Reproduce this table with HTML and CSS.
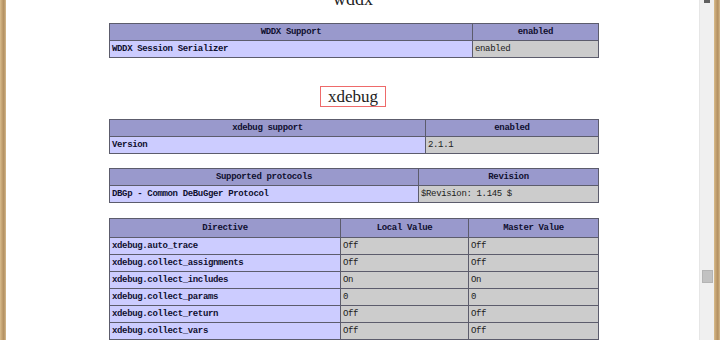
FILE: index.html
```html
<!DOCTYPE html>
<html lang="en">
<head>
  <meta charset="UTF-8">
  <title>phpinfo()</title>
  <link rel="stylesheet" href="styles.css">
</head>
<body>
  <div class="window">
    <div class="frame"></div>

    <div class="viewport">
      <div class="page">
        <h2 class="module-title first">wddx</h2>
        <table class="info t-wddx">
          <colgroup><col class="c1"><col class="c2"></colgroup>
          <tr class="h"><th>WDDX Support</th><th>enabled</th></tr>
          <tr><td class="e">WDDX Session Serializer</td><td class="v">enabled</td></tr>
        </table>

        <h2 class="module-title"><a class="anchor" name="module_xdebug">xdebug</a></h2>
        <table class="info t-support">
          <colgroup><col class="c1"><col class="c2"></colgroup>
          <tr class="h"><th>xdebug support</th><th>enabled</th></tr>
          <tr><td class="e">Version</td><td class="v">2.1.1</td></tr>
        </table>

        <table class="info t-protocols">
          <colgroup><col class="c1"><col class="c2"></colgroup>
          <tr class="h"><th>Supported protocols</th><th>Revision</th></tr>
          <tr><td class="e">DBGp - Common DeBuGger Protocol</td><td class="v">$Revision: 1.145 $</td></tr>
        </table>

        <table class="info t-directives">
          <colgroup><col class="c1"><col class="c2"><col class="c3"></colgroup>
          <tr class="h tall"><th>Directive</th><th>Local Value</th><th>Master Value</th></tr>
          <tr><td class="e">xdebug.auto_trace</td><td class="v">Off</td><td class="v">Off</td></tr>
          <tr><td class="e">xdebug.collect_assignments</td><td class="v">Off</td><td class="v">Off</td></tr>
          <tr><td class="e">xdebug.collect_includes</td><td class="v">On</td><td class="v">On</td></tr>
          <tr><td class="e">xdebug.collect_params</td><td class="v">0</td><td class="v">0</td></tr>
          <tr><td class="e">xdebug.collect_return</td><td class="v">Off</td><td class="v">Off</td></tr>
          <tr><td class="e">xdebug.collect_vars</td><td class="v">Off</td><td class="v">Off</td></tr>
          <tr><td class="e">xdebug.default_enable</td><td class="v">On</td><td class="v">On</td></tr>
        </table>
      </div>
    </div>

    <div class="scrollbar">
      <div class="arrow"></div>
      <div class="thumb"></div>
    </div>

    <div class="frame"></div>
  </div>
</body>
</html>
```

FILE: styles.css
```css
html, body {
  margin: 0;
  padding: 0;
  background: #fff;
}
.window {
  display: flex;
  width: 720px;
  height: 340px;
  overflow: hidden;
}
.frame {
  width: 6px;
  flex: none;
  background: linear-gradient(to right, #d8bc8c 0, #c4a272 2px, #b08e60 4px, #c9aa7c 5px, #d3b78b 6px);
}
.viewport {
  flex: 1;
  overflow: hidden;
  background: #fff;
}
.page {
  width: 694px;
  text-align: center;
  color: #000;
}
.module-title {
  margin: 28px 0 12px;
  font-family: "Liberation Serif", serif;
  font-size: 17px;
  font-weight: normal;
  line-height: 19px;
  color: #222;
}
/* previous module's title, scrolled mostly out of view */
.module-title.first {
  margin: -10px 0 14px;
  font-size: 18px;
}
.anchor {
  display: inline-block;
  padding: 0 7px;
  border: 1px solid #ee6a6a;
  color: #222;
}

/* info tables */
.info {
  border-collapse: collapse;
  table-layout: fixed;
  width: 489px;
  margin: 0 0 15px 103px;
  font-family: "Liberation Mono", monospace;
  font-size: 9px;
  letter-spacing: -0.35px;
  text-align: left;
}
.info td, .info th {
  border: 1px solid #5c5c6c;
  height: 16px;
  padding: 0 2px;
  line-height: 16px;
  white-space: nowrap;
  overflow: hidden;
  color: #101030;
}
.info .h th {
  background: #9999cc;
  text-align: center;
  font-weight: bold;
}
.info .h.tall th {
  height: 18px;
}
.info .e {
  background: #ccccff;
  font-weight: bold;
}
.info .v {
  background: #cccccc;
  color: #202020;
}
.t-wddx .c1 { width: 363px; }
.t-wddx .c2 { width: 126px; }
.t-support { margin-bottom: 14px; }
.t-support .c1 { width: 316px; }
.t-support .c2 { width: 173px; }
.t-protocols .c1 { width: 309px; }
.t-protocols .c2 { width: 180px; }
.t-directives { margin-bottom: 0; }
.t-directives .c1 { width: 231px; }
.t-directives .c2 { width: 128px; }
.t-directives .c3 { width: 130px; }

/* scrollbar */
.scrollbar {
  width: 14px;
  flex: none;
  background: #f0f0f0;
  border-left: 1px solid #e6e6e6;
  display: flex;
  flex-direction: column;
  align-items: center;
}
.arrow {
  width: 6px;
  height: 3px;
  background: #606060;
}
.thumb {
  width: 11px;
  height: 13px;
  margin-top: 267px;
  background: #c2c2c2;
  border: 1px solid #b4b4b4;
  box-sizing: border-box;
}
```
